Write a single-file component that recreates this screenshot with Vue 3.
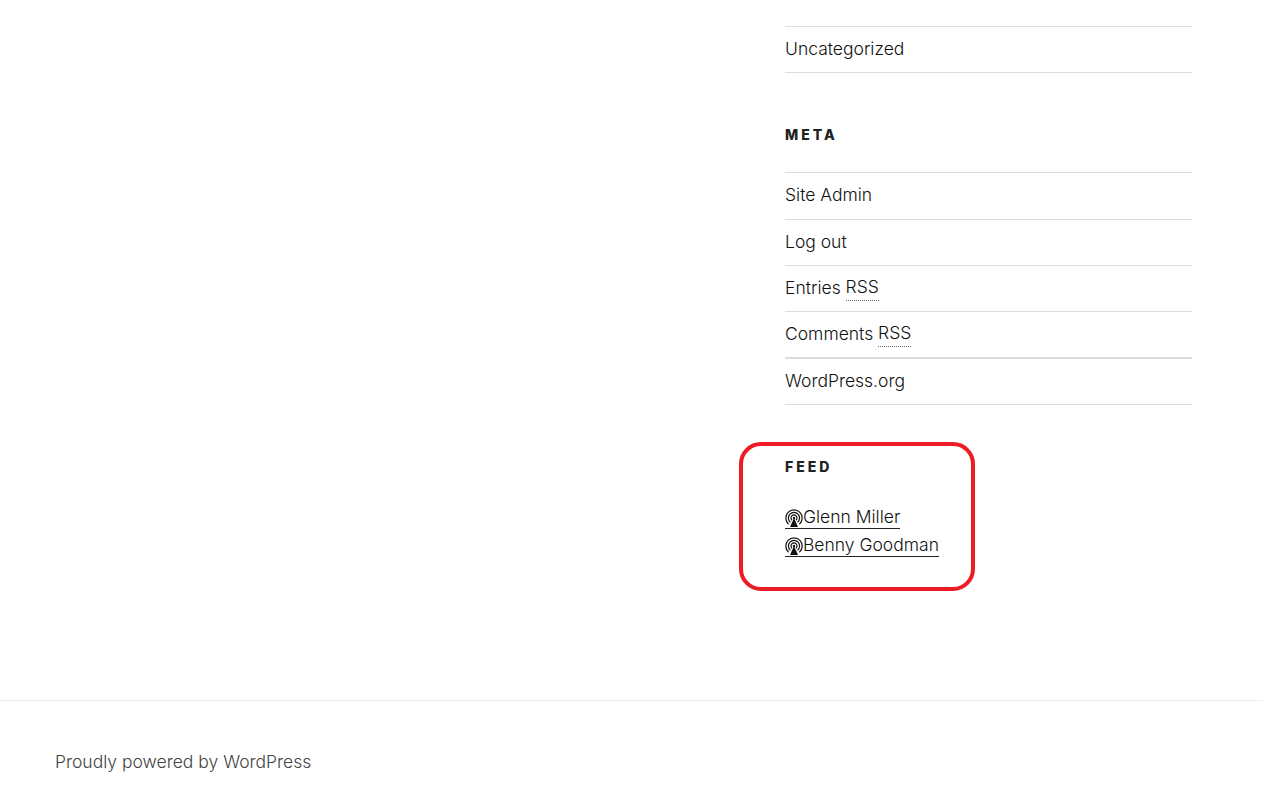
<script setup>
const cats = ['Uncategorized']
const meta = [
  { text: 'Site Admin' },
  { text: 'Log out' },
  { text: 'Entries ', abbr: 'RSS' },
  { text: 'Comments ', abbr: 'RSS' },
  { text: 'WordPress.org' }
]
const feeds = ['Glenn Miller', 'Benny Goodman']
</script>

<template>
  <div class="page">
    <div class="content">
      <aside class="sidebar">
        <ul class="list first">
          <li v-for="c in cats" :key="c"><a>{{ c }}</a></li>
        </ul>
        <section class="widget meta">
          <h2>META</h2>
          <ul class="list">
            <li v-for="m in meta" :key="m.text">
              <a>{{ m.text }}<abbr v-if="m.abbr">{{ m.abbr }}</abbr></a>
            </li>
          </ul>
        </section>
        <section class="widget feed">
          <h2>FEED</h2>
          <div class="feeds">
            <div v-for="f in feeds" :key="f" class="feed-row">
              <a class="feed-link">
                <svg class="tower" viewBox="0 0 18 18" width="18" height="18" aria-hidden="true">
                  <g fill="none" stroke="#111" stroke-width="1.2">
                    <path d="M3.6 15.2A8.2 8.2 0 1 1 14.4 15.2" />
                    <path d="M5.4 13.2A5.6 5.6 0 1 1 12.6 13.2" />
                    <path d="M7 11.2A3 3 0 1 1 11 11.2" />
                  </g>
                  <circle cx="9" cy="9" r="1.2" fill="#111" />
                  <path d="M9 9 L13 18 H5 Z" fill="#111" />
                </svg>{{ f }}
              </a>
            </div>
          </div>
          <div class="highlight"></div>
        </section>
      </aside>
    </div>
    <footer class="footer">Proudly powered by WordPress</footer>
  </div>
</template>

<style>
html, body { margin: 0; background: #fff; overflow: hidden; }
</style>

<style scoped>
.page {
  height: 801px;
  display: flex;
  flex-direction: column;
  font-family: "Inter", "Liberation Sans", sans-serif;
  font-weight: 300;
  color: #111;
  background: #fff;
}
.content {
  height: 701px;
  flex: none;
  box-sizing: border-box;
  padding: 26px 71px 0 785px;
  border-bottom: 1px solid #eee;
}
.sidebar { width: 407px; }
.list {
  list-style: none;
  margin: 0;
  padding: 0;
  font-size: 17.5px;
  border-bottom: 1px solid #ddd;
}
.list li {
  height: 46.3px;
  box-sizing: border-box;
  border-top: 1px solid #ddd;
  display: flex;
  align-items: center;
  padding-bottom: 2px;
}
.list li:nth-child(5) { border-top-width: 2px; }
abbr { border-bottom: 1px dotted #666; line-height: 20px; padding: 3px 0; display: inline-block; }
.list a { white-space: pre; display: flex; align-items: center; }
h2 {
  margin: 0;
  font-size: 14px;
  font-weight: 800;
  letter-spacing: 3px;
  line-height: 20px;
  color: #222;
}
.widget { position: relative; }
.meta { margin-top: 52px; }
.meta h2 { margin-bottom: 27px; }
.feed { margin-top: 52px; }
.feed h2 { margin-bottom: 26px; }
.feed-row { height: 28px; font-size: 17.5px; }
.feed-link {
  display: inline-flex;
  align-items: center;
  height: 22px;
  padding-top: 3px;
  border-bottom: 1px solid #222;
}
.tower { display: block; flex: none; margin-top: 3px; }
.highlight {
  position: absolute;
  left: -46px;
  top: -15px;
  width: 236px;
  height: 149px;
  box-sizing: border-box;
  border: 4px solid #ed1c24;
  border-radius: 22px;
}
.footer {
  padding: 49px 0 0 55px;
  font-size: 17.5px;
  line-height: 24px;
  color: #444;
}
</style>
